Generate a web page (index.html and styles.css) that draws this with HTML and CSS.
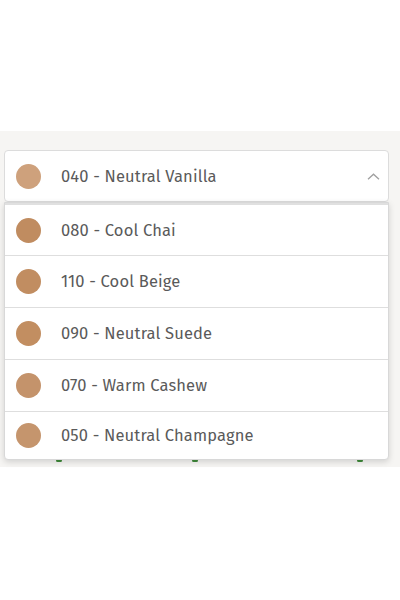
FILE: index.html
```html
<!DOCTYPE html>
<html>
<head>
<meta charset="utf-8">
<link rel="stylesheet" href="styles.css">
</head>
<body>
<div class="top"></div>
<section class="band">
  <div class="select">
    <div class="current">
      <span class="dot dot-vanilla"></span>
      <span class="label">040 - Neutral Vanilla</span>
      <svg class="chev" width="13" height="7" viewBox="0 0 13 7"><path d="M1 6.3 L6.5 1.2 L12 6.3" fill="none" stroke="#a0a0a0" stroke-width="1.3"/></svg>
    </div>
    <div class="below">
      <span class="g g1"></span><span class="g g2"></span><span class="g g3"></span>
    </div>
    <ul class="list">
      <li><span class="dot dot-chai"></span><span class="label">080 - Cool Chai</span></li>
      <li><span class="dot dot-beige"></span><span class="label">110 - Cool Beige</span></li>
      <li><span class="dot dot-suede"></span><span class="label">090 - Neutral Suede</span></li>
      <li><span class="dot dot-cashew"></span><span class="label">070 - Warm Cashew</span></li>
      <li><span class="dot dot-champ"></span><span class="label">050 - Neutral Champagne</span></li>
    </ul>
  </div>
</section>
</body>
</html>
```
FILE: styles.css
```css
html, body { margin: 0; padding: 0; background: #ffffff; }
body { width: 400px; height: 600px; font-family: "Fira Sans", "Noto Sans", "Open Sans", sans-serif; }
.top { height: 131px; }
.band {
  background: #f6f5f3;
  height: 336px;
  padding: 19px 11px 0 4px;
  box-sizing: border-box;
}
.select { position: relative; }
.current {
  height: 52px;
  box-sizing: border-box;
  background: #fff;
  border: 1px solid #dcdcdc;
  border-radius: 4px;
  display: flex;
  align-items: center;
  padding: 0 8px 0 11px;
}
.dot {
  width: 25px; height: 25px; border-radius: 50%;
  flex: none;
  margin-right: 20px;
}
.dot-vanilla { background: #cea17c; }
.dot-chai { background: #c08c60; }
.dot-beige { background: #c18d61; }
.dot-suede { background: #c28e61; }
.dot-cashew { background: #c4936b; }
.dot-champ { background: #c5956d; }
.label {
  font-size: 16.5px;
  color: #5a5a5a;
  letter-spacing: 0.15px;
  flex: 1;
}
.chev { flex: none; }
.below { height: 260px; position: relative; }
.g { position: absolute; top: 257px; width: 6px; height: 3px; background: #3f8a3a; border-radius: 2px; }
.g1 { left: 52px; }
.g2 { left: 188px; }
.g3 { left: 353px; }
.list {
  position: absolute;
  top: 52px; left: 0; right: 0;
  margin: 0; padding: 0;
  list-style: none;
  background: #fff;
  border: 1px solid #d8d8d8;
  border-radius: 0 0 4px 4px;
  box-shadow: 0 2px 6px rgba(0,0,0,0.15);
}
.list li {
  height: 52px;
  box-sizing: border-box;
  display: flex;
  align-items: center;
  padding-left: 11px;
  border-top: 1px solid #dedede;
}
.list li:first-child { border-top: 2px solid #e0e0e0; }
.list li:last-child { height: 48px; }
```
